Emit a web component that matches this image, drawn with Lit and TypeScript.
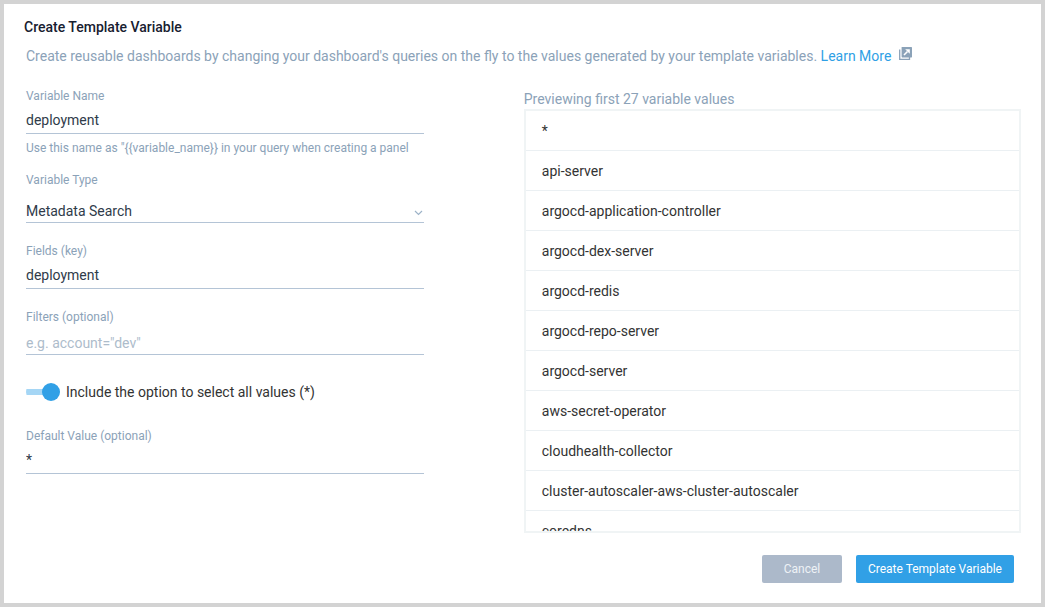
import { LitElement, html, css } from "lit";
import { customElement, state } from "lit/decorators.js";

const VALUES = [
  "*",
  "api-server",
  "argocd-application-controller",
  "argocd-dex-server",
  "argocd-redis",
  "argocd-repo-server",
  "argocd-server",
  "aws-secret-operator",
  "cloudhealth-collector",
  "cluster-autoscaler-aws-cluster-autoscaler",
  "coredns",
];

@customElement("value-preview")
export class ValuePreview extends LitElement {
  static styles = css`
    :host {
      display: block;
      min-width: 0;
      padding-top: 1px;
    }
    .caption {
      margin: 0;
      color: #8ba2b8;
      font-size: 14px;
      font-weight: 400;
      line-height: 20px;
    }
    .list {
      list-style: none;
      margin: 0;
      padding: 0;
      box-sizing: border-box;
      max-height: 424px;
      overflow-y: auto;
      scrollbar-width: none;
      border: 2px solid #f0f4f5;
    }
    .item {
      box-sizing: border-box;
      height: 40px;
      padding: 0 16px;
      border-bottom: 1px solid #ebf0f3;
      color: #333;
      font-size: 14px;
      line-height: 40px;
      overflow: hidden;
      white-space: nowrap;
      text-overflow: ellipsis;
    }
  `;

  render() {
    return html`
      <h2 class="caption">Previewing first 27 variable values</h2>
      <ul class="list">
        ${VALUES.map((value) => html`<li class="item">${value}</li>`)}
      </ul>
    `;
  }
}

@customElement("app-root")
export class AppRoot extends LitElement {
  @state() private includeAll = true;

  static styles = css`
    :host {
      display: block;
      font-family: Roboto, "Liberation Sans", sans-serif;
      font-size: 14px;
      color: #2f3b4a;
    }
    .dialog {
      box-sizing: border-box;
      min-height: 100vh;
      border: 4px solid #d3d3d3;
      background: #fff;
      padding: 13px 20px 20px;
    }
    .title {
      margin: 0;
      color: #172030;
      font-size: 14px;
      font-weight: 500;
      line-height: 20px;
    }
    .intro {
      display: flex;
      align-items: flex-start;
      gap: 8px;
      margin: 9px 0 0;
      padding-left: 2px;
      color: #8ba2b8;
      line-height: 20px;
    }
    .link {
      color: #2f9fe5;
      text-decoration: none;
    }
    .external {
      display: block;
      flex: none;
      margin-top: 1px;
    }
    .columns {
      display: grid;
      grid-template-columns: minmax(0, 4fr) minmax(0, 5fr);
      column-gap: 100px;
      align-items: start;
      margin-top: 22px;
      padding-left: 2px;
    }
    .form {
      display: flex;
      flex-direction: column;
      gap: 20px;
    }
    .group {
      display: flex;
      flex-direction: column;
      gap: 16px;
    }
    .field {
      display: flex;
      flex-direction: column;
    }
    .label,
    .hint {
      color: #8ba2b8;
      font-size: 12px;
      line-height: 16px;
    }
    .hint {
      margin: 6px 0 0;
    }
    .input,
    .select {
      box-sizing: border-box;
      width: 100%;
      height: 30px;
      margin: 0;
      padding: 2px 0 0;
      border: 0;
      border-bottom: 1px solid #b4c4d6;
      border-radius: 0;
      outline: 0;
      background: none;
      color: inherit;
      font: inherit;
    }
    .input:placeholder-shown {
      padding-top: 6px;
    }
    .input::placeholder {
      color: #adbccb;
      opacity: 1;
    }
    .select-box {
      display: grid;
      align-items: end;
    }
    .select-box > * {
      grid-area: 1 / 1;
    }
    .select {
      appearance: none;
      height: 35px;
      padding-top: 12px;
    }
    .chevron {
      justify-self: end;
      margin: 0 1px 7px 0;
      pointer-events: none;
    }
    .toggle {
      display: flex;
      align-items: center;
      gap: 6px;
      margin: 7px 0 6px;
      color: #333;
      line-height: 20px;
    }
    .switch {
      appearance: none;
      display: flex;
      align-items: center;
      width: 34px;
      height: 18px;
      margin: 0;
      background: linear-gradient(#a5d6f5, #a5d6f5) left center / 28px 6px no-repeat;
      border-radius: 9px;
    }
    .switch::before {
      content: "";
      width: 18px;
      height: 18px;
      border-radius: 50%;
      background: #a9b8c8;
    }
    .switch:checked::before {
      margin-left: auto;
      background: #31a0e6;
    }
    .actions {
      display: flex;
      justify-content: flex-end;
      gap: 14px;
      margin-top: 22px;
      padding-right: 7px;
    }
    .button {
      min-width: 80px;
      height: 28px;
      padding: 0 12px;
      border: 0;
      border-radius: 2px;
      background: #acb9ca;
      color: #eef2f6;
      font: inherit;
      font-size: 12px;
    }
    .primary {
      background: #31a0e6;
      color: #fff;
    }
  `;

  private onToggle(event: Event) {
    this.includeAll = (event.target as HTMLInputElement).checked;
  }

  render() {
    return html`
      <main class="dialog">
        <h1 class="title">Create Template Variable</h1>
        <p class="intro">
          <span
            >Create reusable dashboards by changing your dashboard's queries on the fly to the
            values generated by your template variables.
            <a class="link" href="#learn-more">Learn More</a></span
          >
          <svg class="external" width="13" height="13" viewBox="0 0 13 13" aria-hidden="true">
            <path d="M0.7 2.5V12.3H10.5V10" fill="none" stroke="#8ba2b8" stroke-width="1.3" />
            <path
              fill="#8ba2b8"
              d="M3.2 0H12.4a.6 .6 0 0 1 .6 .6V9.8a.6 .6 0 0 1-.6 .6H3.2a.6 .6 0 0 1-.6-.6V.6a.6 .6 0 0 1 .6-.6Z"
            />
            <path d="M5 8L8.5 4.5" stroke="#fff" stroke-width="1.6" />
            <path d="M6.2 2.2H10.8V6.8Z" fill="#fff" />
          </svg>
        </p>

        <div class="columns">
          <form class="form">
            <div class="group">
              <div class="field">
                <label class="label" for="name">Variable Name</label>
                <input class="input" id="name" type="text" value="deployment" />
                <p class="hint">
                  Use this name as "{{variable_name}} in your query when creating a panel
                </p>
              </div>
              <div class="field">
                <label class="label" for="type">Variable Type</label>
                <div class="select-box">
                  <select class="select" id="type">
                    <option>Metadata Search</option>
                  </select>
                  <svg class="chevron" width="9" height="6" viewBox="0 0 9 6" aria-hidden="true">
                    <path d="M1 1L4.5 4.5L8 1" fill="none" stroke="#9db3c8" stroke-width="1.2" />
                  </svg>
                </div>
              </div>
            </div>
            <div class="field">
              <label class="label" for="key">Fields (key)</label>
              <input class="input" id="key" type="text" value="deployment" />
            </div>
            <div class="field">
              <label class="label" for="filters">Filters (optional)</label>
              <input class="input" id="filters" type="text" placeholder='e.g. account="dev"' />
            </div>
            <label class="toggle">
              <input
                class="switch"
                type="checkbox"
                role="switch"
                .checked=${this.includeAll}
                @change=${this.onToggle}
              />
              Include the option to select all values (*)
            </label>
            <div class="field">
              <label class="label" for="default">Default Value (optional)</label>
              <input class="input" id="default" type="text" value="*" />
            </div>
          </form>
          <value-preview></value-preview>
        </div>

        <footer class="actions">
          <button class="button" type="button">Cancel</button>
          <button class="button primary" type="button">Create Template Variable</button>
        </footer>
      </main>
    `;
  }
}
